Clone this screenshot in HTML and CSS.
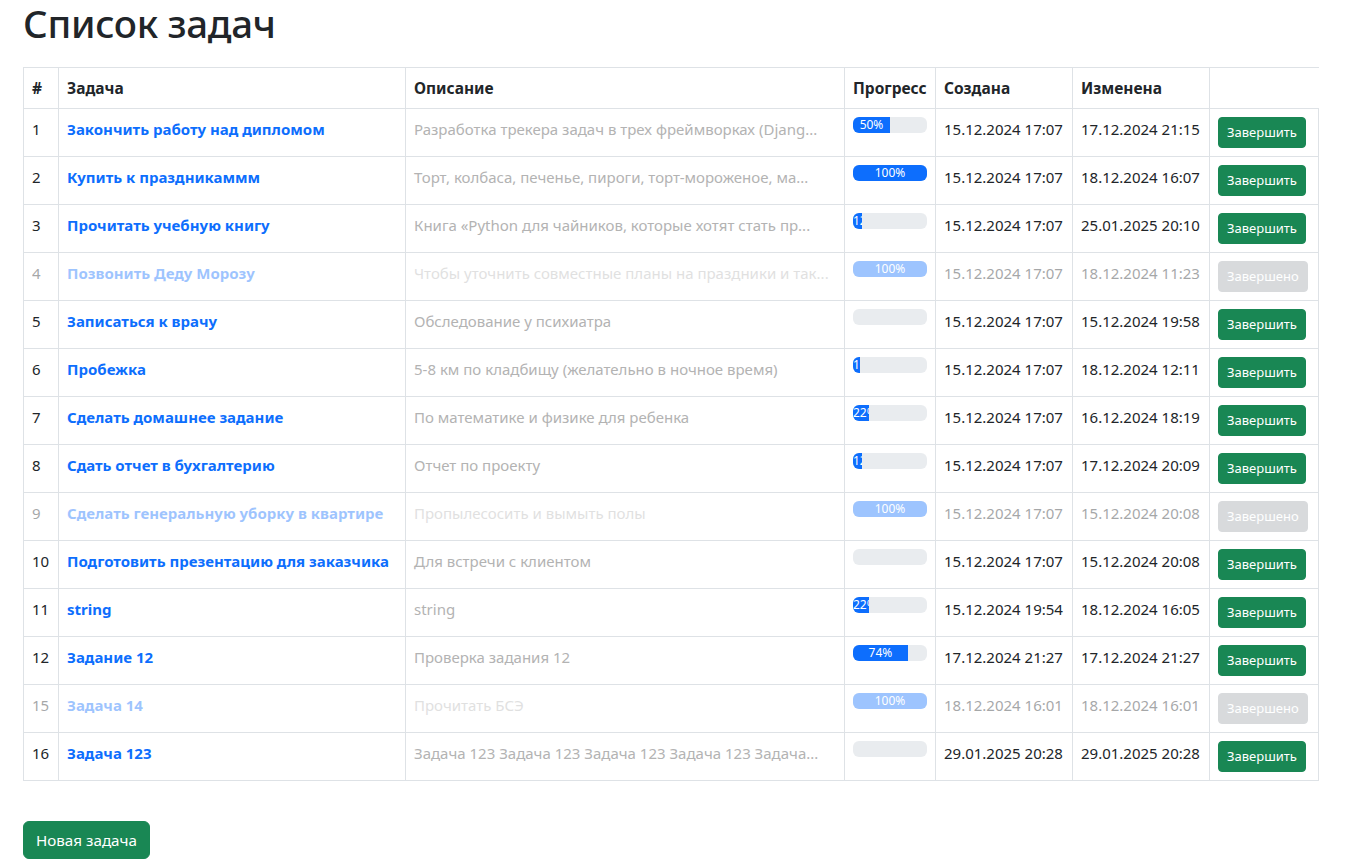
FILE: index.html
```html
<!DOCTYPE html>
<html lang="ru">
<head>
<meta charset="utf-8">
<title>Список задач</title>
<link rel="stylesheet" href="styles.css">
</head>
<body>
<div class="page">
  <h1 class="title">Список задач</h1>
  <table class="tasks">
    <colgroup>
      <col class="c-num"><col class="c-name"><col class="c-desc"><col class="c-prog"><col class="c-date"><col class="c-date"><col class="c-act">
    </colgroup>
    <thead>
      <tr><th>#</th><th>Задача</th><th>Описание</th><th>Прогресс</th><th>Создана</th><th>Изменена</th></tr>
    </thead>
    <tbody>
      <tr>
        <td>1</td><td><a class="task-link" href="#">Закончить работу над дипломом</a></td>
        <td class="desc">Разработка трекера задач в трех фреймворках (Djang...</td>
        <td><div class="progress"><div class="progress-bar" style="width:50%">50%</div></div></td>
        <td>15.12.2024 17:07</td><td>17.12.2024 21:15</td>
        <td><button class="btn-sm btn-done">Завершить</button></td>
      </tr>
      <tr>
        <td>2</td><td><a class="task-link" href="#">Купить к праздникаммм</a></td>
        <td class="desc">Торт, колбаса, печенье, пироги, торт-мороженое, ма...</td>
        <td><div class="progress"><div class="progress-bar" style="width:100%">100%</div></div></td>
        <td>15.12.2024 17:07</td><td>18.12.2024 16:07</td>
        <td><button class="btn-sm btn-done">Завершить</button></td>
      </tr>
      <tr>
        <td>3</td><td><a class="task-link" href="#">Прочитать учебную книгу</a></td>
        <td class="desc">Книга «Python для чайников, которые хотят стать пр...</td>
        <td><div class="progress"><div class="progress-bar" style="width:12%">12%</div></div></td>
        <td>15.12.2024 17:07</td><td>25.01.2025 20:10</td>
        <td><button class="btn-sm btn-done">Завершить</button></td>
      </tr>
      <tr class="completed">
        <td>4</td><td><a class="task-link" href="#">Позвонить Деду Морозу</a></td>
        <td class="desc">Чтобы уточнить совместные планы на праздники и так...</td>
        <td><div class="progress"><div class="progress-bar" style="width:100%">100%</div></div></td>
        <td>15.12.2024 17:07</td><td>18.12.2024 11:23</td>
        <td><button class="btn-sm btn-finished" disabled>Завершено</button></td>
      </tr>
      <tr>
        <td>5</td><td><a class="task-link" href="#">Записаться к врачу</a></td>
        <td class="desc">Обследование у психиатра</td>
        <td><div class="progress"><div class="progress-bar" style="width:0%">0%</div></div></td>
        <td>15.12.2024 17:07</td><td>15.12.2024 19:58</td>
        <td><button class="btn-sm btn-done">Завершить</button></td>
      </tr>
      <tr>
        <td>6</td><td><a class="task-link" href="#">Пробежка</a></td>
        <td class="desc">5-8 км по кладбищу (желательно в ночное время)</td>
        <td><div class="progress"><div class="progress-bar" style="width:10%">10%</div></div></td>
        <td>15.12.2024 17:07</td><td>18.12.2024 12:11</td>
        <td><button class="btn-sm btn-done">Завершить</button></td>
      </tr>
      <tr>
        <td>7</td><td><a class="task-link" href="#">Сделать домашнее задание</a></td>
        <td class="desc">По математике и физике для ребенка</td>
        <td><div class="progress"><div class="progress-bar" style="width:22%">22%</div></div></td>
        <td>15.12.2024 17:07</td><td>16.12.2024 18:19</td>
        <td><button class="btn-sm btn-done">Завершить</button></td>
      </tr>
      <tr>
        <td>8</td><td><a class="task-link" href="#">Сдать отчет в бухгалтерию</a></td>
        <td class="desc">Отчет по проекту</td>
        <td><div class="progress"><div class="progress-bar" style="width:12%">12%</div></div></td>
        <td>15.12.2024 17:07</td><td>17.12.2024 20:09</td>
        <td><button class="btn-sm btn-done">Завершить</button></td>
      </tr>
      <tr class="completed">
        <td>9</td><td><a class="task-link" href="#">Сделать генеральную уборку в квартире</a></td>
        <td class="desc">Пропылесосить и вымыть полы</td>
        <td><div class="progress"><div class="progress-bar" style="width:100%">100%</div></div></td>
        <td>15.12.2024 17:07</td><td>15.12.2024 20:08</td>
        <td><button class="btn-sm btn-finished" disabled>Завершено</button></td>
      </tr>
      <tr>
        <td>10</td><td><a class="task-link" href="#">Подготовить презентацию для заказчика</a></td>
        <td class="desc">Для встречи с клиентом</td>
        <td><div class="progress"><div class="progress-bar" style="width:0%">0%</div></div></td>
        <td>15.12.2024 17:07</td><td>15.12.2024 20:08</td>
        <td><button class="btn-sm btn-done">Завершить</button></td>
      </tr>
      <tr>
        <td>11</td><td><a class="task-link" href="#">string</a></td>
        <td class="desc">string</td>
        <td><div class="progress"><div class="progress-bar" style="width:22%">22%</div></div></td>
        <td>15.12.2024 19:54</td><td>18.12.2024 16:05</td>
        <td><button class="btn-sm btn-done">Завершить</button></td>
      </tr>
      <tr>
        <td>12</td><td><a class="task-link" href="#">Задание 12</a></td>
        <td class="desc">Проверка задания 12</td>
        <td><div class="progress"><div class="progress-bar" style="width:74%">74%</div></div></td>
        <td>17.12.2024 21:27</td><td>17.12.2024 21:27</td>
        <td><button class="btn-sm btn-done">Завершить</button></td>
      </tr>
      <tr class="completed">
        <td>15</td><td><a class="task-link" href="#">Задача 14</a></td>
        <td class="desc">Прочитать БСЭ</td>
        <td><div class="progress"><div class="progress-bar" style="width:100%">100%</div></div></td>
        <td>18.12.2024 16:01</td><td>18.12.2024 16:01</td>
        <td><button class="btn-sm btn-finished" disabled>Завершено</button></td>
      </tr>
      <tr>
        <td>16</td><td><a class="task-link" href="#">Задача 123</a></td>
        <td class="desc">Задача 123 Задача 123 Задача 123 Задача 123 Задача...</td>
        <td><div class="progress"><div class="progress-bar" style="width:0%">0%</div></div></td>
        <td>29.01.2025 20:28</td><td>29.01.2025 20:28</td>
        <td><button class="btn-sm btn-done">Завершить</button></td>
      </tr>
    </tbody>
  </table>
  <button class="btn-new">Новая задача</button>
</div>
</body>
</html>
```
FILE: styles.css
```css
* { box-sizing: border-box; }
html, body {
  margin: 0;
  background: #fff;
}
body {
  font-family: "Noto Sans", "Open Sans", sans-serif;
  font-size: 15px;
  line-height: 24px;
  color: #212529;
}
.page {
  padding: 0 0 0 23px;
}
.title {
  margin: 0 0 21px 0;
  font-size: 38.5px;
  line-height: 46px;
  font-weight: 500;
  color: #212529;
  letter-spacing: -0.3px;
}
.tasks {
  width: 1296px;
  border-collapse: collapse;
  table-layout: fixed;
  margin: 0;
}
.c-num { width: 35px; }
.c-name { width: 347px; }
.c-desc { width: 439px; }
.c-prog { width: 91px; }
.c-date { width: 137px; }
.c-act { width: 109px; }
.tasks tr {
  border-top: 1px solid #dee2e6;
  border-bottom: 1px solid #dee2e6;
}
.tasks th, .tasks td {
  border-left: 1px solid #dee2e6;
  border-right: 1px solid #dee2e6;
  padding: 8px;
  vertical-align: top;
  text-align: left;
  white-space: nowrap;
  overflow: hidden;
}
.tasks th {
  font-weight: 700;
  font-size: 15.5px;
}
.tasks td {
  font-size: 15px;
}
.task-link {
  color: #0d6efd;
  font-weight: 700;
  text-decoration: none;
}
.desc {
  color: #b3b3b3;
}
.completed td {
  opacity: 0.4;
}
.completed td.desc {
  opacity: 0.4;
}
.progress {
  display: flex;
  height: 16px;
  overflow: hidden;
  background: #e9ecef;
  border-radius: 6px;
  font-size: 12px;
  line-height: 16px;
}
.progress-bar {
  display: flex;
  flex-direction: column;
  justify-content: center;
  overflow: hidden;
  color: #fff;
  text-align: center;
  white-space: nowrap;
  background: #0d6efd;
}
.btn-sm {
  font-family: inherit;
  font-size: 13px;
  line-height: 21px;
  padding: 4px 8px;
  border-radius: 4px;
  border: 1px solid transparent;
  color: #fff;
  cursor: pointer;
}
.btn-done {
  background: #198754;
  border-color: #198754;
}
.btn-finished {
  background: #6c757d;
  border-color: #6c757d;
  opacity: 0.65;
}
.btn-new {
  margin-top: 40px;
  font-family: inherit;
  font-size: 15.2px;
  line-height: 24px;
  padding: 6px 12px;
  border-radius: 6px;
  border: 1px solid #198754;
  background: #198754;
  color: #fff;
  cursor: pointer;
}
```
